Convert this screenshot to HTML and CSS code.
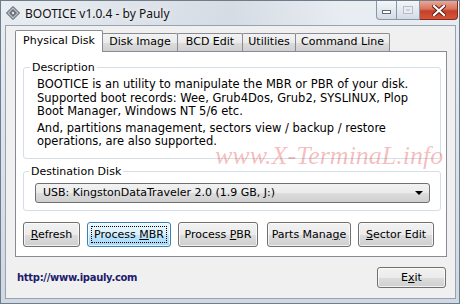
FILE: index.html
```html
<!DOCTYPE html>
<html lang="en">
<head>
    <meta charset="UTF-8">
    <title>BOOTICE v1.0.4 - by Pauly</title>
    <link rel="stylesheet" href="styles.css">
</head>
<body>

    <div class="window">

        <!-- Title bar -->
        <div class="titlebar">
            <svg class="app-icon" width="14" height="14" viewBox="0 0 14 14">
                <polygon points="7,0.5 13.5,7 7,13.5 0.5,7" fill="#b9bec4" stroke="#4a4f55"/>
                <polygon points="7,3 11,7 7,11 3,7" fill="#6d737a"/>
                <circle cx="7" cy="7" r="1.2" fill="#e8eaec"/>
            </svg>
            <span class="title">BOOTICE v1.0.4 - by Pauly</span>
            <div class="caption-buttons">
                <div class="cap-btn cap-min"><span></span></div>
                <div class="cap-btn cap-max"><span></span></div>
                <div class="cap-btn cap-close">
                    <svg width="14" height="11" viewBox="0 0 14 11">
                        <path d="M2 1 L12 10 M12 1 L2 10" stroke="#5a1a10" stroke-width="4" stroke-linecap="square"/>
                        <path d="M2 1 L12 10 M12 1 L2 10" stroke="#fff" stroke-width="2.2" stroke-linecap="square"/>
                    </svg>
                </div>
            </div>
        </div>

        <!-- Client area -->
        <div class="client">

            <div class="tabs">
                <div class="tab active w-phys">Physical Disk</div>
                <div class="tab w-img">Disk Image</div>
                <div class="tab w-bcd">BCD Edit</div>
                <div class="tab w-util">Utilities</div>
                <div class="tab w-cmd">Command Line</div>
            </div>

            <div class="panel">
                <fieldset class="group desc">
                    <legend>Description</legend>
                    <p>BOOTICE is an utility to manipulate the MBR or PBR of your disk.<br>Supported boot records: Wee, Grub4Dos, Grub2, SYSLINUX, Plop<br>Boot Manager, Windows NT 5/6 etc.</p>
                    <p>And, partitions management, sectors view / backup / restore<br>operations, are also supported.</p>
                </fieldset>

                <fieldset class="group dest">
                    <legend>Destination Disk</legend>
                    <div class="combo">
                        <span>USB: KingstonDataTraveler 2.0 (1.9 GB, J:)</span>
                        <span class="arrow"></span>
                    </div>
                </fieldset>

                <div class="actions">
                    <button class="btn w-refresh"><span><u>R</u>efresh</span></button>
                    <button class="btn focused w-mbr"><span class="focus-rect">Process <u>M</u>BR</span></button>
                    <button class="btn w-pbr"><span>Process <u>P</u>BR</span></button>
                    <button class="btn w-parts"><span>Parts Mana<u>g</u>e</span></button>
                    <button class="btn w-sector"><span><u>S</u>ector Edit</span></button>
                </div>

                <div class="watermark">www.X-TerminaL.info</div>
            </div>

            <div class="footer">
                <a class="link" href="#">http://www.ipauly.com</a>
                <button class="btn exit"><span>E<u>x</u>it</span></button>
            </div>
        </div>
    </div>

</body>
</html>
```

FILE: styles.css
```css
* {
    margin: 0;
    padding: 0;
    box-sizing: border-box;
}

body {
    width: 460px;
    height: 304px;
    overflow: hidden;
    font-family: 'DejaVu Sans', sans-serif;
    font-size: 11px;
    color: #000;
}

/* Window frame */
.window {
    width: 460px;
    height: 304px;
    border: 1px solid #6f7c8a;
    padding: 0 3px 4px 4px;
    background: linear-gradient(180deg, #e9eef3 0%, #dde4ec 40%, #cfd8e3 100%);
    display: flex;
    flex-direction: column;
}

.titlebar {
    height: 24px;
    display: flex;
    align-items: flex-start;
    background: linear-gradient(90deg, rgba(255,255,255,0) 0%, rgba(120,130,150,0.16) 50%, rgba(255,255,255,0) 75%);
}

.app-icon {
    margin: 5px 0 0 1px;
}

.title {
    margin: 4px 0 0 5px;
    font-family: 'Noto Sans', sans-serif;
    font-size: 12px;
    color: #111;
    text-shadow: 0 0 6px #fff;
}

.caption-buttons {
    margin-left: auto;
    margin-right: -2px;
    display: flex;
    height: 19px;
}

.cap-btn {
    height: 19px;
    border: 1px solid #8a97a6;
    border-top: none;
    background: linear-gradient(180deg, #f3f6f9 0%, #e3e9ef 50%, #d3dbe4 100%);
    display: flex;
    align-items: center;
    justify-content: center;
}

.cap-min {
    width: 21px;
    border-radius: 0 0 0 4px;
}

.cap-min span {
    width: 9px;
    height: 4px;
    border: 1px solid #5f6b78;
    background: #fff;
    margin-top: 3px;
}

.cap-max {
    width: 23px;
    border-left: none;
}

.cap-max span {
    width: 10px;
    height: 8px;
    border: 1px solid #b5bec8;
    box-shadow: inset 0 0 0 2px #e9edf1;
    background: #c8d0d8;
}

.cap-close {
    width: 38px;
    border-left: none;
    border-color: #7e2a1c;
    border-radius: 0 0 4px 0;
    background: linear-gradient(180deg, #e8a898 0%, #d9725c 45%, #c4412a 55%, #d4543a 100%);
}

/* Client */
.client {
    flex: 1;
    border: 1px solid #97a3b0;
    background: #f0f0f0;
    display: flex;
    flex-direction: column;
}

.tabs {
    display: flex;
    align-items: flex-end;
    height: 21px;
    margin: 4px 0 0 9px;
    position: relative;
    z-index: 1;
}

.tab {
    height: 18px;
    line-height: 16px;
    text-align: center;
    border: 1px solid #898c95;
    border-bottom: none;
    margin-right: -1px;
    border-radius: 2px 2px 0 0;
    background: linear-gradient(180deg, #f3f3f3 0%, #ebebeb 50%, #dddddd 51%, #cfcfcf 100%);
    white-space: nowrap;
}

.tab.active {
    height: 22px;
    line-height: 19px;
    background: #fff;
    margin-bottom: -1px;
}

.w-phys { width: 88px; }
.w-img { width: 76px; }
.w-bcd { width: 66px; }
.w-util { width: 54px; }
.w-cmd { width: 95px; }

.panel {
    position: relative;
    margin-left: 9px;
    width: 432px;
    height: 206px;
    border: 1px solid #898c95;
    background: #fff;
    display: flex;
    flex-direction: column;
}

.group {
    border: 1px solid #d5dfe5;
    border-radius: 3px;
    margin: 0 5px 0 7px;
}

.group legend {
    padding: 0 2px;
    line-height: 13px;
}

.desc {
    margin-top: 9px;
    padding: 4px 8px 9px 13px;
}

.desc legend {
    margin-left: -7px;
}

.desc p {
    font-size: 11.5px;
    line-height: 13.5px;
    white-space: nowrap;
}

.desc p + p {
    margin-top: 3px;
}

.dest {
    margin-top: 6px;
    padding: 5px 10px 7px 11px;
}

.dest legend {
    margin-left: -6px;
}

.combo {
    height: 20px;
    border: 1px solid #707070;
    border-radius: 3px;
    background: linear-gradient(180deg, #f2f2f2 0%, #ebebeb 50%, #dddddd 51%, #cfcfcf 100%);
    display: flex;
    align-items: center;
    padding: 0 6px 0 7px;
}

.combo .arrow {
    margin-left: auto;
    width: 0;
    height: 0;
    border-left: 4px solid transparent;
    border-right: 4px solid transparent;
    border-top: 4px solid #000;
}

.actions {
    display: flex;
    gap: 7px;
    margin: 11px 0 0 7px;
}

.btn {
    height: 25px;
    font-family: 'DejaVu Sans', sans-serif;
    font-size: 11px;
    color: #000;
    border: 1px solid #707070;
    border-radius: 3px;
    background: linear-gradient(180deg, #f2f2f2 0%, #ebebeb 50%, #dddddd 51%, #cfcfcf 100%);
    box-shadow: inset 0 0 0 1px rgba(255, 255, 255, 0.7);
    display: flex;
    align-items: center;
    justify-content: center;
    white-space: nowrap;
}

.btn.focused {
    border-color: #3c7fb1;
    background: linear-gradient(180deg, #eaf6fd 0%, #d9f0fc 50%, #bee6fd 51%, #a7d9f5 100%);
    padding: 3px;
}

.focus-rect {
    flex: 1;
    align-self: stretch;
    border: 1px dotted #000;
    text-align: center;
    line-height: 15px;
}

.w-refresh { width: 57px; }
.w-mbr { width: 84px; }
.w-pbr { width: 80px; margin-right: 2px; }
.w-parts { width: 84px; }
.w-sector { width: 76px; }

.watermark {
    position: absolute;
    left: 199px;
    top: 89px;
    font-family: 'Liberation Serif', serif;
    font-style: italic;
    font-size: 26px;
    color: rgba(228, 50, 50, 0.33);
    pointer-events: none;
    white-space: nowrap;
}

.footer {
    flex: 1;
    display: flex;
    align-items: center;
    justify-content: space-between;
    padding: 0 9px 0 11px;
}

.link {
    font-weight: bold;
    color: #1c1c6e;
    text-decoration: none;
    font-size: 10px;
    letter-spacing: -0.3px;
}

.exit {
    width: 69px;
    height: 21px;
}
```
